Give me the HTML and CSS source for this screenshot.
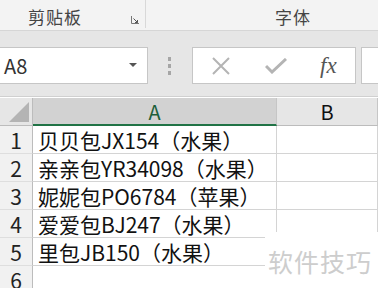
FILE: index.html
```html
<!DOCTYPE html>
<html lang="zh">
<head>
<meta charset="UTF-8" />
<title>剪贴板</title>
<link rel="stylesheet" href="styles.css">
</head>
<body>
<div class="ribbon">
  <div class="group group-clip">
    <span class="group-label">剪贴板</span>
    <svg class="launcher" width="8" height="8" viewBox="0 0 8 8">
      <path d="M0.5 0v7.5h7.5" fill="none" stroke="#777" stroke-width="1"/>
      <path d="M2.5 2.5l4 4M4 6.5h2.5v-2.5" fill="none" stroke="#555" stroke-width="1"/>
    </svg>
  </div>
  <div class="group group-font">
    <span class="group-label">字体</span>
  </div>
</div>

<div class="fbar">
  <div class="namebox">
    <span>A8</span>
    <svg width="8" height="5" viewBox="0 0 8 5"><path d="M0 0h8L4 4z" fill="#555"/></svg>
  </div>
  <div class="grip"><i></i><i></i><i></i></div>
  <div class="fbuttons">
    <svg class="fb-x" width="18" height="18" viewBox="0 0 18 18">
      <path d="M1 1l16 16M17 1L1 17" stroke="#b4b4b4" stroke-width="2"/>
    </svg>
    <svg class="fb-ok" width="22" height="16" viewBox="0 0 22 16">
      <path d="M1 8l6 6L21 1" fill="none" stroke="#b4b4b4" stroke-width="3"/>
    </svg>
    <span class="fx">fx</span>
  </div>
  <div class="formula"></div>
</div>

<div class="sheet">
  <div class="corner"><span class="tri"></span></div>
  <div class="colhead sel">A</div>
  <div class="colhead">B</div>

  <div class="rowhead">1</div><div class="cell">贝贝包JX154（水果）</div><div class="cell"></div>
  <div class="rowhead">2</div><div class="cell">亲亲包YR34098（水果）</div><div class="cell"></div>
  <div class="rowhead">3</div><div class="cell">妮妮包PO6784（苹果）</div><div class="cell"></div>
  <div class="rowhead">4</div><div class="cell">爱爱包BJ247（水果）</div><div class="cell"></div>
  <div class="rowhead">5</div><div class="cell">里包JB150（水果）</div><div class="cell"></div>
  <div class="rowhead">6</div><div class="cell"></div><div class="cell"></div>

  <div class="watermark">软件技巧</div>
</div>
</body>
</html>
```

FILE: styles.css
```css
body {
  margin: 0;
  width: 378px;
  height: 288px;
  overflow: hidden;
  background: #fff;
  font-family: "Noto Sans CJK SC", "Noto Sans", sans-serif;
  color: #222;
}
.ribbon {
  display: flex;
  height: 30px;
  background: #f3f3f3;
  border-bottom: 1px solid #d6d6d6;
}
.group {
  position: relative;
  display: flex;
  align-items: center;
  height: 28px;
  padding-top: 4px;
  box-sizing: border-box;
}
.group-clip {
  width: 146px;
  border-right: 1px solid #d8d8d8;
}
.group-label {
  font-size: 17px;
  color: #444;
  line-height: 1;
  letter-spacing: 1px;
}
.group-clip .group-label {
  margin-left: 28px;
}
.launcher {
  position: absolute;
  left: 131px;
  top: 16px;
}
.group-font .group-label {
  margin-left: 129px;
}

.fbar {
  display: flex;
  align-items: flex-start;
  height: 66px;
  padding-top: 16px;
  box-sizing: border-box;
  background: #e6e6e6;
  border-bottom: 1px solid #d0d0d0;
}
.namebox {
  display: flex;
  align-items: center;
  justify-content: space-between;
  width: 148px;
  height: 37px;
  box-sizing: border-box;
  padding: 0 10px 0 4px;
  background: #fff;
  border: 1px solid #c6c6c6;
  border-left: none;
  font-size: 20px;
  color: #333;
}
.grip {
  display: flex;
  flex-direction: column;
  gap: 3px;
  margin: 10px 0 0 20px;
}
.grip i {
  width: 3px;
  height: 4px;
  background: #a6a6a6;
}
.fbuttons {
  display: flex;
  align-items: center;
  width: 164px;
  height: 37px;
  box-sizing: border-box;
  margin-left: 21px;
  background: #fff;
  border: 1px solid #c6c6c6;
}
.fb-x {
  margin-left: 19px;
}
.fb-ok {
  margin-left: 35px;
}
.fx {
  margin-left: 33px;
  font-family: "Liberation Serif", serif;
  font-style: italic;
  font-size: 23px;
  color: #555;
}
.formula {
  flex: 1;
  height: 37px;
  box-sizing: border-box;
  margin-left: 5px;
  background: #fff;
  border: 1px solid #c6c6c6;
  border-right: none;
}

.sheet {
  position: relative;
  display: grid;
  grid-template-columns: 33px 244px 1fr;
  grid-template-rows: 28px repeat(6, 28px);
  margin-top: 1px;
}
.corner {
  position: relative;
  background: #e6e6e6;
  border-right: 1px solid #bcbcbc;
  border-bottom: 1px solid #bcbcbc;
}
.tri {
  position: absolute;
  right: 3px;
  bottom: 3px;
  width: 0;
  height: 0;
  border-left: 20px solid transparent;
  border-bottom: 20px solid #b4b4b4;
}
.colhead {
  display: flex;
  align-items: center;
  justify-content: center;
  background: #e6e6e6;
  border-right: 1px solid #c6c6c6;
  border-bottom: 1px solid #bcbcbc;
  font-size: 20px;
  color: #111;
}
.colhead.sel {
  background: #d2d2d2;
  color: #1e5e3a;
  border-bottom: 2px solid #217346;
}
.rowhead {
  display: flex;
  align-items: center;
  justify-content: center;
  background: #f1f1f1;
  border-right: 1px solid #bcbcbc;
  border-bottom: 1px solid #dedede;
  font-size: 21px;
  color: #222;
}
.cell {
  display: flex;
  align-items: center;
  padding-left: 5px;
  border-right: 1px solid #d4d4d4;
  border-bottom: 1px solid #d4d4d4;
  font-size: 21px;
  white-space: nowrap;
  color: #111;
}
.watermark {
  position: absolute;
  left: 265px;
  top: 134px;
  width: 113px;
  height: 60px;
  background: #fff;
  padding-left: 3px;
  font-size: 25px;
  color: #cdcdcd;
  letter-spacing: 1px;
  line-height: 58px;
}
```
